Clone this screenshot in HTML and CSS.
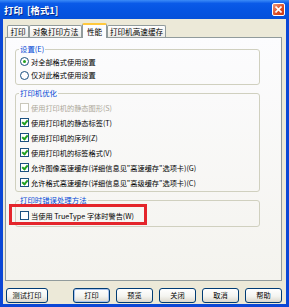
FILE: index.html
```html
<!DOCTYPE html>
<html lang="zh-CN">
<head>
<meta charset="utf-8">
<title>打印 [格式1]</title>
<link rel="stylesheet" href="styles.css">
</head>
<body>
<div class="window">
  <div class="titlebar">
    <span class="title">打印 &nbsp;[格式1]</span>
    <span class="close"><svg width="7" height="7" viewBox="0 0 7 7"><path d="M0.5 0.5L6.5 6.5M6.5 0.5L0.5 6.5" stroke="#fff" stroke-width="1.6"/></svg></span>
  </div>
  <div class="client">
    <div class="tabs">
      <div class="tab t1">打印</div>
      <div class="tab t2">对象打印方法</div>
      <div class="tab t3 active">性能</div>
      <div class="tab t4">打印机高速缓存</div>
    </div>
    <div class="panel">
      <fieldset class="group g1">
        <legend>设置(E)</legend>
        <div class="row"><span class="radio on"></span>对全部格式使用设置</div>
        <div class="row"><span class="radio"></span>仅对此格式使用设置</div>
      </fieldset>
      <fieldset class="group g2">
        <legend>打印机优化</legend>
        <div class="row disabled"><span class="check"></span>使用打印机的静态图形(S)</div>
        <div class="row"><span class="check on"></span>使用打印机的静态标签(T)</div>
        <div class="row"><span class="check on"></span>使用打印机的序列(Z)</div>
        <div class="row"><span class="check on"></span>使用打印机的标签格式(V)</div>
        <div class="row"><span class="check on"></span>允许图像高速缓存(详细信息见"高速缓存"选项卡)(G)</div>
        <div class="row"><span class="check on"></span>允许格式高速缓存(详细信息见"高级缓存"选项卡)(C)</div>
      </fieldset>
      <fieldset class="group g3">
        <legend>打印时错误处理方法</legend>
        <div class="row"><span class="check"></span>当使用 TrueType 字体时警告(W)</div>
      </fieldset>
      <div class="highlight"></div>
    </div>
    <div class="buttons">
      <div class="btn test">测试打印</div>
      <div class="btn-group">
        <div class="btn default">打印</div>
        <div class="btn">预览</div>
        <div class="btn">关闭</div>
        <div class="btn">取消</div>
        <div class="btn">帮助</div>
      </div>
    </div>
  </div>
</div>
</body>
</html>
```

FILE: styles.css
```css
* { box-sizing: border-box; }
html, body { margin: 0; padding: 0; }
body {
  width: 289px;
  height: 307px;
  overflow: hidden;
  font-family: "Noto Sans CJK SC", "Noto Sans", sans-serif;
  font-size: 7.2px;
  color: #000;
}
.window {
  width: 289px;
  height: 307px;
  display: flex;
  flex-direction: column;
  background: #0B47D6;
}
.titlebar {
  height: 19px;
  flex: none;
  display: flex;
  align-items: center;
  justify-content: space-between;
  padding: 0 4px 0 4px;
  background: linear-gradient(#3C8CF8 0%, #0A5AE8 18%, #0554E2 55%, #0550DA 100%);
}
.title {
  color: #fff;
  font-weight: bold;
  font-size: 9.4px;
  line-height: 12px;
  text-shadow: 1px 1px 0 #0A2A8A;
  white-space: pre;
}
.close {
  width: 13px;
  height: 13px;
  border: 1px solid #fff;
  border-radius: 2px;
  background: linear-gradient(135deg, #EE9A7C, #DC4A22 60%, #C83A16);
  display: flex;
  align-items: center;
  justify-content: center;
}
.close svg { display: block; }
.client {
  flex: 1;
  margin: 0 3px 3px 3px;
  background: #ECE9D8;
  display: flex;
  flex-direction: column;
  padding-top: 3px;
}
.tabs {
  height: 15px;
  flex: none;
  display: flex;
  align-items: flex-end;
  padding-left: 4px;
  position: relative;
  z-index: 2;
  font-size: 7.6px;
}
.tab {
  height: 12px;
  border: 1px solid #919B9C;
  border-bottom: none;
  border-radius: 2px 2px 0 0;
  background: linear-gradient(#FFFFFF, #ECEBE6);
  display: flex;
  align-items: center;
  justify-content: center;
  line-height: 9px;
  white-space: nowrap;
}
.t1 { width: 22px; }
.t2 { width: 53px; }
.t3 { width: 25px; }
.t4 { width: 59px; }
.tab.active {
  height: 15px;
  margin-bottom: -1px;
  background: #FCFCFE;
  border-top: 2px solid #FFC83C;
  padding-bottom: 1px;
}
.panel {
  position: relative;
  margin-left: 2px;
  width: 277px;
  height: 244px;
  flex: none;
  border: 1px solid #919B9C;
  background: linear-gradient(#FCFCFE, #F4F3EE);
  padding: 6px 0 0 9px;
}
.group {
  width: 245px;
  margin: 0;
  padding: 0 0 2px 0;
  border: 1px solid #D0D0BF;
  border-radius: 3px;
  min-width: 0;
}
.group legend {
  margin-left: 3px;
  padding: 0 1px;
  color: #0046D5;
  line-height: 10px;
  font-size: 7.4px;
}
.g2 { margin-top: 3px; }
.g3 { margin-top: 3px; }
.row {
  height: 15px;
  display: flex;
  align-items: center;
  padding-left: 4px;
  white-space: nowrap;
}
.g1 .row { height: 13.5px; }
.g1 { padding-top: 1px; }
.g2 { padding-top: 2px; padding-bottom: 1px; }
.g3 { padding-top: 3px; padding-bottom: 3px; }
.row.disabled { color: #ACA899; }
.radio {
  width: 9px;
  height: 9px;
  border: 1px solid #1C5180;
  border-radius: 50%;
  background: #fff;
  margin-right: 2px;
  flex: none;
  display: flex;
  align-items: center;
  justify-content: center;
}
.radio.on::after {
  content: "";
  width: 3px;
  height: 3px;
  border-radius: 50%;
  background: #21A121;
}
.check {
  width: 9px;
  height: 9px;
  border: 1px solid #1C5180;
  background: #fff;
  margin-right: 2px;
  flex: none;
  position: relative;
}
.row.disabled .check { border-color: #CAC8BB; }
.check.on::after {
  content: "";
  position: absolute;
  left: 1px;
  top: 0px;
  width: 2px;
  height: 4px;
  border: solid #21A121;
  border-width: 0 2px 2px 0;
  transform: translate(1px, 0) rotate(40deg);
}
.highlight {
  position: absolute;
  left: 3px;
  top: 166px;
  width: 138px;
  height: 21px;
  border: 3px solid #E4252B;
  pointer-events: none;
}
.buttons {
  height: 15px;
  flex: none;
  margin-top: 7px;
  display: flex;
  padding: 0 4px 0 3px;
}
.btn-group {
  margin-left: auto;
  display: flex;
  gap: 6px;
}
.btn {
  width: 37px;
  height: 15px;
  border: 1px solid #003C74;
  border-radius: 3px;
  background: linear-gradient(#FFFFFF, #F4F4F0 55%, #DCD8CC);
  display: flex;
  align-items: center;
  justify-content: center;
  white-space: nowrap;
  line-height: 9px;
}
.btn.test { width: 42px; }
.btn.default { box-shadow: inset 0 0 0 1px #A9C3EE; }
```
